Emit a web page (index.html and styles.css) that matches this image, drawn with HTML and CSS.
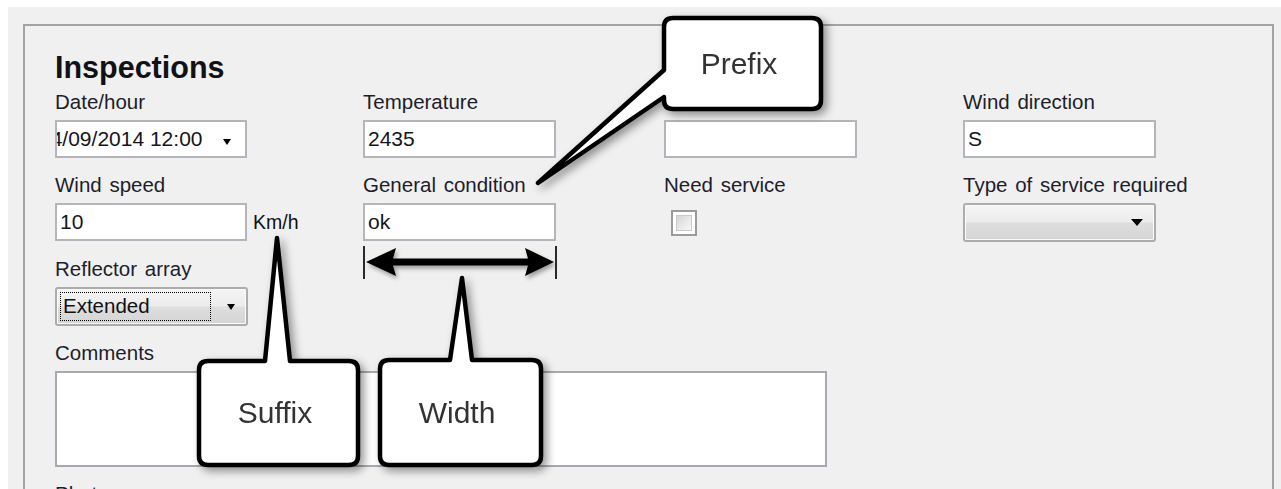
FILE: index.html
```html
<!DOCTYPE html>
<html>
<head>
<meta charset="utf-8">
<title>Inspections</title>
<link rel="stylesheet" href="styles.css">
</head>
<body>
<div class="screen">
  <div class="panel">
    <h1 class="title">Inspections</h1>
    <div class="grid">
      <div class="field">
        <div class="label">Date/hour</div>
        <div class="input combo"><span class="date-text">14/09/2014 12:00</span><span class="arrow small"></span></div>
      </div>
      <div class="field">
        <div class="label">Temperature</div>
        <div class="input">2435</div>
      </div>
      <div class="field">
        <div class="label">&nbsp;</div>
        <div class="input"></div>
      </div>
      <div class="field">
        <div class="label">Wind direction</div>
        <div class="input">S</div>
      </div>

      <div class="field">
        <div class="label">Wind speed</div>
        <div class="with-suffix">
          <div class="input">10</div>
          <span class="suffix">Km/h</span>
        </div>
      </div>
      <div class="field">
        <div class="label">General condition</div>
        <div class="input">ok</div>
      </div>
      <div class="field">
        <div class="label">Need service</div>
        <div class="check-wrap"><span class="checkbox"><span class="check-inner"></span></span></div>
      </div>
      <div class="field">
        <div class="label">Type of service required</div>
        <div class="select"><span class="select-text"></span><span class="arrow big"></span></div>
      </div>

      <div class="field">
        <div class="label">Reflector array</div>
        <div class="select"><span class="focus">Extended</span><span class="arrow small"></span></div>
      </div>
    </div>
    <div class="field comments">
      <div class="label">Comments</div>
      <div class="textarea"></div>
    </div>
    <div class="field photo">
      <div class="label">Photo</div>
    </div>
  </div>
</div>

<svg class="overlay" width="1281" height="489" viewBox="0 0 1281 489" xmlns="http://www.w3.org/2000/svg">
  <g class="callout">
    <path d="M673 18 H812 Q821 18 821 27 V100 Q821 109 812 109 H673 Q664 109 664 100 V97 L538 183 L664 70 V27 Q664 18 673 18 Z"/>
    <text x="739" y="74">Prefix</text>
  </g>
  <g class="callout">
    <path d="M208 361 H265 L277 238 L290 361 H349 Q358 361 358 370 V456 Q358 465 349 465 H208 Q199 465 199 456 V370 Q199 361 208 361 Z"/>
    <text x="275" y="423">Suffix</text>
  </g>
  <g class="callout">
    <path d="M389 360 H450 L462 278 L472 360 H532 Q541 360 541 369 V456 Q541 465 532 465 H389 Q380 465 380 456 V369 Q380 360 389 360 Z"/>
    <text x="457" y="423">Width</text>
  </g>
  <g class="measure">
    <line x1="364" y1="246" x2="364" y2="279"/>
    <line x1="556" y1="246" x2="556" y2="279"/>
    <polygon class="dbl" points="366,262 396,248 393,258.5 528,258.5 525,248 554,262 525,276 528,265.5 393,265.5 396,276"/>
  </g>
</svg>
</body>
</html>
```
FILE: styles.css
```css
* { box-sizing: border-box; }
html { margin: 0; padding: 0; }
body {
  margin: 7px 0 0 8px;
  background: #ffffff;
  overflow: hidden;
  height: 482px;
  font-family: "Liberation Sans", Arial, sans-serif;
  color: #1c1c26;
}
.screen {
  background: #f0f0f0;
  padding: 17px 7px 0 15px;
  height: 482px;
  overflow: hidden;
}
.panel {
  border: 2px solid #a3a3a3;
  border-bottom: none;
  padding: 24px 0 0 30px;
  height: 520px;
}
.title {
  margin: 0 0 7px;
  font-size: 30.5px;
  line-height: 34px;
  font-weight: bold;
  color: #111118;
}
.grid {
  display: grid;
  grid-template-columns: 308px 301px 299px 1fr;
  row-gap: 16px;
}
.label {
  font-size: 20.5px;
  line-height: 22px;
  height: 22px;
  margin-bottom: 7px;
  white-space: nowrap;
  word-spacing: 2px;
  color: #1d1d2b;
}
.input {
  width: 193px;
  height: 38px;
  background: #ffffff;
  border: 2px solid #b3b5ba;
  display: flex;
  align-items: center;
  padding: 0 3px;
  font-size: 21px;
  color: #15151c;
  overflow: hidden;
  white-space: nowrap;
}
.combo {
  position: relative;
  width: 192px;
  padding: 0;
}
.date-text {
  margin-left: -18px;
  padding-right: 40px;
}
.arrow {
  width: 0;
  height: 0;
  border-left: 4.5px solid transparent;
  border-right: 4.5px solid transparent;
  border-top: 6px solid #000;
  flex-shrink: 0;
}
.arrow.big {
  border-left-width: 6.5px;
  border-right-width: 6.5px;
  border-top-width: 7px;
}
.combo .arrow {
  position: absolute;
  right: 14px;
  top: 17px;
}
.with-suffix {
  display: flex;
  align-items: center;
  gap: 6px;
}
.with-suffix .input { width: 192px; }
.suffix {
  font-size: 19.5px;
  color: #111;
}
.check-wrap {
  height: 38px;
  padding: 7px 0 0 7px;
}
.checkbox {
  display: block;
  width: 26px;
  height: 26px;
  border: 2px solid #9b9b9b;
  background: #ffffff;
  padding: 3px;
}
.check-inner {
  display: block;
  width: 100%;
  height: 100%;
  background: linear-gradient(135deg, #d3d3d6 0%, #e9e9eb 55%, #f8f8f8 100%);
  border: 1px solid #c9c9cc;
}
.select {
  width: 193px;
  height: 39px;
  border: 2px solid #acacac;
  border-radius: 3px;
  background: linear-gradient(#f4f4f4 0%, #ececec 48%, #dedede 52%, #d4d4d4 100%);
  box-shadow: inset 0 0 0 1px #fbfbfb;
  display: flex;
  align-items: center;
  justify-content: space-between;
  padding: 0 11px 0 3px;
  font-size: 20.5px;
  color: #111;
}
.focus {
  width: 151px;
  height: 29px;
  border: 1px dotted #000;
  display: flex;
  align-items: center;
  padding-left: 2px;
  line-height: 1;
}
.comments { margin-top: 16px; }
.textarea {
  width: 772px;
  height: 96px;
  background: #ffffff;
  border: 2px solid #a6a9af;
}
.photo { margin-top: 16px; }

.overlay {
  position: absolute;
  left: 0;
  top: 0;
  pointer-events: none;
}
.callout {
  filter: drop-shadow(4px 4px 4px rgba(0, 0, 0, 0.4));
}
.callout path {
  fill: #ffffff;
  stroke: #000000;
  stroke-width: 4.5;
  stroke-linejoin: round;
}
.callout text {
  font-family: "Liberation Sans", Arial, sans-serif;
  font-size: 30px;
  fill: #333333;
  text-anchor: middle;
}
.measure line {
  stroke: #2a2a2a;
  stroke-width: 2;
}
.dbl {
  fill: #000000;
  filter: drop-shadow(2px 3px 2px rgba(0, 0, 0, 0.35));
}
```
